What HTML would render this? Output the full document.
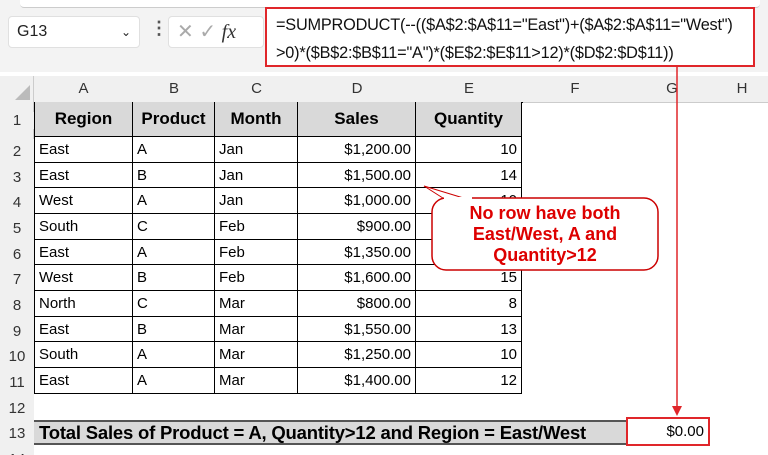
<!DOCTYPE html>
<html style="overflow:hidden;width:768px;height:455px"><head><style>
*{margin:0;padding:0;box-sizing:border-box}
body{width:768px;height:455px;overflow:hidden;background:#fff;font-family:"Liberation Sans",Arial,sans-serif;position:relative;color:#000}
.a{position:absolute}
.top{left:0;top:0;width:768px;height:72px;background:#f3f3f3}
.hdr{background:#f0f0f0;color:#333;font-size:15px;text-align:center}
.c{position:absolute;font-size:15px;line-height:25px;white-space:nowrap;padding:0 4px;border-right:1px solid #000;border-bottom:1px solid #000;overflow:hidden}
.r{text-align:right}
.h{background:#d9d9d9;font-weight:bold;font-size:17px;text-align:center;line-height:33px}
</style></head><body>
<div class="a top"></div>
<div class="a" style="left:20px;top:0;width:740px;height:8px;background:#fff;border-bottom:1px solid #ccc;border-radius:0 0 4px 4px"></div>
<div class="a" style="left:8px;top:16px;width:132px;height:32px;background:#fff;border:1px solid #e0e0e0;border-radius:4px;font-size:16px;line-height:30px;padding-left:8px;color:#222">G13<span style="position:absolute;right:8px;top:0;font-size:12px">&#8964;</span></div>
<div class="a" style="left:150px;top:18px;color:#555;font-size:18px;font-weight:bold">&#8942;</div>
<div class="a" style="left:168px;top:16px;width:96px;height:32px;background:#fff;border:1px solid #e0e0e0;border-radius:4px;font-size:20px;line-height:30px;color:#aaa;padding-left:8px">✕ ✓ <i style="font-family:'Liberation Serif',serif;color:#333">fx</i></div>
<div class="a" style="left:265px;top:7px;width:490px;height:60px;background:#fff;border:2px solid #e0262a;font-size:16.3px;line-height:28px;padding:2px 0 0 9px;color:#111;white-space:nowrap;letter-spacing:-0.2px">=SUMPRODUCT(--(($A$2:$A$11="East")+($A$2:$A$11="West")<br>&gt;0)*($B$2:$B$11="A")*($E$2:$E$11&gt;12)*($D$2:$D$11))</div>
<div class="a hdr" style="left:0;top:76px;width:768px;height:27px;border-bottom:1px solid #ccc"></div>
<div class="a hdr" style="left:0;top:76px;width:34px;height:379px;border-right:1px solid #ccc"></div>
<svg class="a" style="left:14px;top:85px" width="18" height="16"><polygon points="16,0 16,15 1,15" fill="#bbb"/></svg>
<div class="a hdr" style="left:34px;top:80px;width:99px">A</div>
<div class="a hdr" style="left:133px;top:80px;width:82px">B</div>
<div class="a hdr" style="left:215px;top:80px;width:83px">C</div>
<div class="a hdr" style="left:298px;top:80px;width:118px">D</div>
<div class="a hdr" style="left:416px;top:80px;width:106px">E</div>
<div class="a hdr" style="left:522px;top:80px;width:106px">F</div>
<div class="a hdr" style="left:628px;top:80px;width:88px">G</div>
<div class="a hdr" style="left:716px;top:80px;width:52px">H</div>
<div class="a hdr" style="left:0;top:112px;width:34px">1</div>
<div class="a hdr" style="left:0;top:139px;width:34px;line-height:25.67px;height:316px;overflow:hidden">2<br>3<br>4<br>5<br>6<br>7<br>8<br>9<br>10<br>11<br>12<br>13<br>14</div>
<div class="a" style="left:34px;top:102px;width:489px;height:292px;border-left:1px solid #000;border-top:1px solid #000"></div>
<div class="c h" style="left:34px;top:102px;width:99px;height:35px;border-left:1px solid #000">Region</div>
<div class="c h" style="left:133px;top:102px;width:82px;height:35px">Product</div>
<div class="c h" style="left:215px;top:102px;width:83px;height:35px">Month</div>
<div class="c h" style="left:298px;top:102px;width:118px;height:35px">Sales</div>
<div class="c h" style="left:416px;top:102px;width:106px;height:35px">Quantity</div>
<div id="rows"></div>
<script>
var d=[["East","A","Jan","$1,200.00",10],["East","B","Jan","$1,500.00",14],["West","A","Jan","$1,000.00",10],["South","C","Feb","$900.00",12],["East","A","Feb","$1,350.00",14],["West","B","Feb","$1,600.00",15],["North","C","Mar","$800.00",8],["East","B","Mar","$1,550.00",13],["South","A","Mar","$1,250.00",10],["East","A","Mar","$1,400.00",12]];
var xs=[34,133,215,298,416,522],h="";
d.forEach(function(r,i){var t=137+i*25.67;for(var j=0;j<5;j++){h+='<div class="c'+(j>2?' r':'')+'" style="left:'+xs[j]+'px;top:'+t+'px;width:'+(xs[j+1]-xs[j])+'px;height:25.67px;line-height:25px;'+(j==0?'border-left:1px solid #000':'')+'">'+r[j]+'</div>';}});
document.getElementById('rows').innerHTML=h;
</script>
<div class="a" style="left:34px;top:420px;width:594px;height:25px;background:#d9d9d9;border-top:2px solid #555;border-bottom:2px solid #555;font-weight:bold;font-size:18.5px;line-height:21px;padding-left:5px;white-space:nowrap;letter-spacing:-0.2px;overflow:hidden">Total Sales of Product = A, Quantity&gt;12 and Region = East/West</div>
<div class="a" style="left:626px;top:417px;width:84px;height:29px;border:2px solid #e0262a;background:#fff;font-size:15px;line-height:25px;text-align:right;padding-right:4px">$0.00</div>
<svg class="a" style="left:0;top:0" width="768" height="455">
<line x1="677" y1="67" x2="677" y2="410" stroke="#e0262a" stroke-width="1.5"/>
<polygon points="672,406 682,406 677,416" fill="#e0262a"/>
<path d="M446,200 L424,186 L470,200 Z" fill="#fff" stroke="#c00" stroke-width="1"/>
<rect x="432" y="198" width="226" height="72" rx="14" fill="#fff" stroke="#c00" stroke-width="1.5"/>
<rect x="444" y="197" width="28" height="3" fill="#fff"/>
<text x="545" y="219" text-anchor="middle" font-family="Liberation Sans" font-weight="bold" font-size="18" fill="#d00">No row have both</text>
<text x="545" y="240" text-anchor="middle" font-family="Liberation Sans" font-weight="bold" font-size="18" fill="#d00">East/West, A and</text>
<text x="545" y="261" text-anchor="middle" font-family="Liberation Sans" font-weight="bold" font-size="18" fill="#d00">Quantity&gt;12</text>
</svg>
</body></html>
